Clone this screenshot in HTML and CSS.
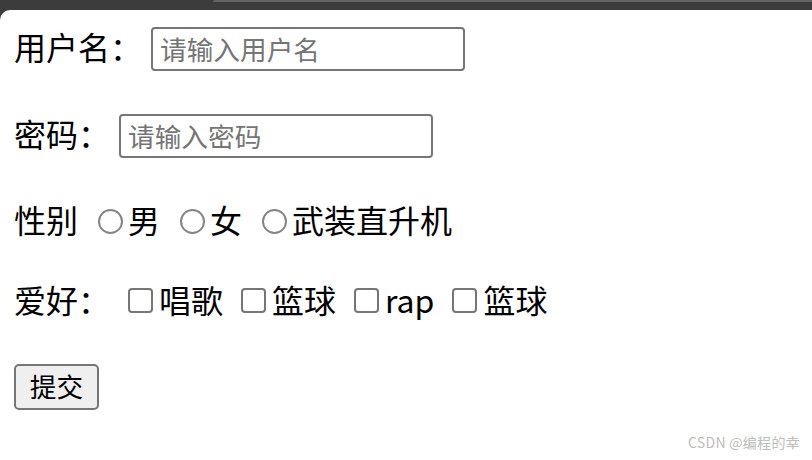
FILE: index.html
```html
<!DOCTYPE html>
<html lang="zh-CN">
<head>
    <meta charset="UTF-8">
    <meta name="viewport" content="width=device-width, initial-scale=1.0">
    <title>表单</title>
    <link rel="stylesheet" href="styles.css">
</head>
<body>

    <div class="titlebar">
        <div class="tab-edge"></div>
    </div>

    <div class="page">
        <form class="form" onsubmit="return false">
            <div class="row row-user">
                <label class="label" for="user">用户名：</label>
                <input class="field" id="user" type="text" placeholder="请输入用户名">
            </div>

            <div class="row row-pwd">
                <label class="label" for="pwd">密码：</label>
                <input class="field" id="pwd" type="password" placeholder="请输入密码">
            </div>

            <div class="row row-sex">
                <span class="label">性别</span>
                <input class="radio" type="radio" name="sex" id="male"><label class="label" for="male">男</label>
                <input class="radio" type="radio" name="sex" id="female"><label class="label" for="female">女</label>
                <input class="radio" type="radio" name="sex" id="heli"><label class="label" for="heli">武装直升机</label>
            </div>

            <div class="row row-hobby">
                <span class="label">爱好：</span>
                <input class="check" type="checkbox" id="sing"><label class="label" for="sing">唱歌</label>
                <input class="check" type="checkbox" id="ball"><label class="label" for="ball">篮球</label>
                <input class="check" type="checkbox" id="rap"><label class="label" for="rap">rap</label>
                <input class="check" type="checkbox" id="ball2"><label class="label" for="ball2">篮球</label>
            </div>

            <div class="row row-submit">
                <button class="btn" type="submit">提交</button>
            </div>
        </form>

        <div class="watermark">CSDN @编程的幸</div>
    </div>

</body>
</html>
```

FILE: styles.css
```css
body {
    margin: 0;
    padding: 0;
    background: #3c3c3c;
    font-family: "Noto Sans CJK SC", "Noto Sans", sans-serif;
    color: #000;
}

.titlebar {
    height: 10px;
}

.tab-edge {
    margin-left: 213px;
    height: 2px;
    background: #646464;
    border-top-left-radius: 2px;
}

.page {
    position: relative;
    height: 450px;
    background: #fff;
    border-top-left-radius: 10px;
    overflow: hidden;
}

.form {
    display: flex;
    flex-direction: column;
    padding: 17px 0 0 14px;
    font-size: 32px;
}

.row {
    display: flex;
    align-items: center;
    height: 44px;
}

/* the text sits a little above the middle of the controls */
.label {
    line-height: 38px;
    padding-bottom: 6px;
}

.row-pwd {
    margin-top: 43px;
}

.row-sex {
    margin-top: 42px;
}

.row-hobby {
    margin-top: 36px;
}

.row-submit {
    margin-top: 40px;
    height: 46px;
}

.field {
    box-sizing: border-box;
    width: 314px;
    height: 44px;
    margin: 0 0 0 9px;
    padding: 0 7px 2px;
    border: 2px solid #767676;
    border-radius: 4px;
    font-family: "Noto Sans CJK SC", sans-serif;
    font-size: 26.67px;
    outline: none;
}

.field::placeholder {
    color: #757575;
}

.radio {
    appearance: none;
    box-sizing: border-box;
    width: 25px;
    height: 25px;
    margin: 0 5px 2px 20px;
    border: 2px solid #858585;
    border-radius: 50%;
    background: #fff;
}

.check {
    appearance: none;
    box-sizing: border-box;
    width: 25px;
    height: 25px;
    margin: 0 6px 4px 18px;
    border: 2px solid #767676;
    border-radius: 4px;
    background: #fff;
}

.btn {
    box-sizing: border-box;
    width: 85px;
    height: 46px;
    padding: 0 0 2px;
    background: #efefef;
    border: 2px solid #767676;
    border-radius: 5px;
    font-family: "Noto Sans CJK SC", sans-serif;
    font-size: 26.67px;
    line-height: 38px;
    color: #000;
}

.watermark {
    position: absolute;
    right: 12px;
    bottom: 8px;
    font-size: 14px;
    letter-spacing: 0.3px;
    color: #bdbdbd;
}
```
